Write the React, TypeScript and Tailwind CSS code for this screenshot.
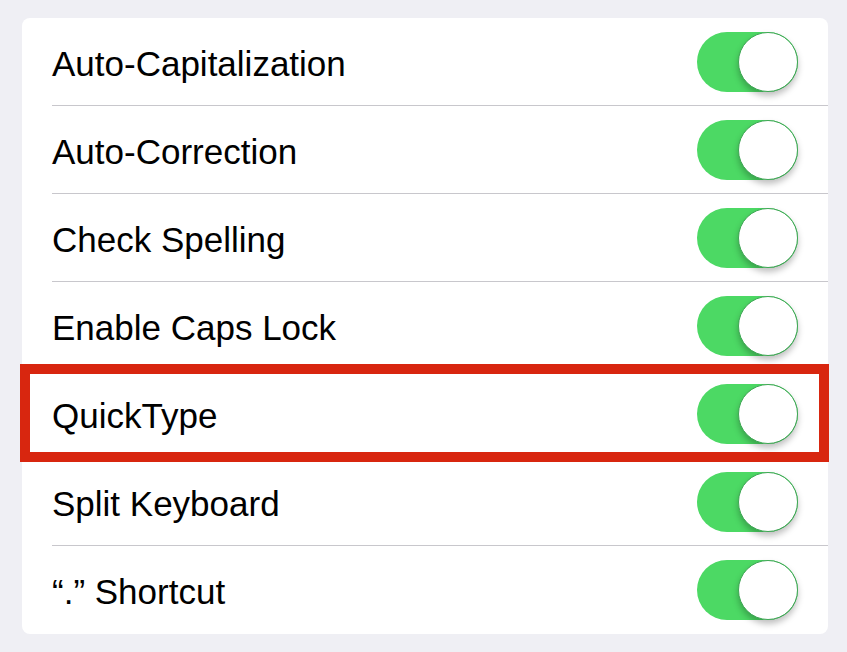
const rows = [
  "Auto-Capitalization",
  "Auto-Correction",
  "Check Spelling",
  "Enable Caps Lock",
  "QuickType",
  "Split Keyboard",
  "\u201C.\u201D Shortcut",
];

const Toggle = () => (
  <div className="relative h-[60px] w-[101px] rounded-full bg-[#4cd964]">
    <div className="absolute right-0 top-0 h-[60px] w-[60px] rounded-full border border-[#3fa655] bg-white shadow-[0_4px_6px_rgba(0,0,0,0.25)]" />
  </div>
);

export default function App() {
  return (
    <div
      className="min-h-[652px] w-full bg-[#efeff4] pl-[22px] pr-[19px] pt-[18px]"
      style={{ fontFamily: '"Helvetica Neue", "Liberation Sans", Arial, sans-serif' }}
    >
      <div className="rounded-[8px] bg-white">
        {rows.map((label, i) => (
          <div key={label} className="relative pl-[30px]">
            <div
              className={
                "flex h-[88px] items-center justify-between pr-[30px] " +
                (i < rows.length - 1 ? "border-b border-[#c8c7cc]" : "")
              }
            >
              <span className="pt-[3px] text-[35px] leading-none text-black">{label}</span>
              <Toggle />
            </div>
            {label === "QuickType" && (
              <div className="pointer-events-none absolute -left-[2px] -right-[1px] -top-[6px] -bottom-[4px] border-[10px] border-[#d8260f]" />
            )}
          </div>
        ))}
      </div>
    </div>
  );
}
